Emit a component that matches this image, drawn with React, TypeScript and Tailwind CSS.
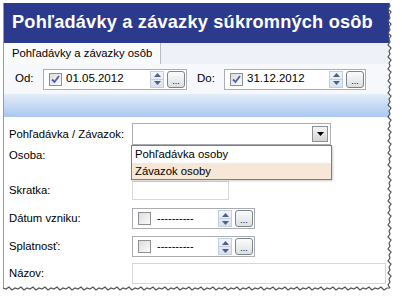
import React from "react";

function Check({ checked }: { checked: boolean }) {
  return (
    <div className="w-[13px] h-[13px] shrink-0 border border-[#8e8f8f] bg-gradient-to-br from-[#dcdcdc] to-[#fbfbfb] flex items-center justify-center">
      {checked && (
        <svg width="11" height="11" viewBox="0 0 11 11">
          <path d="M2 5.5 L4.5 8 L9 2" fill="none" stroke="#4a5fb3" strokeWidth="1.8" />
        </svg>
      )}
    </div>
  );
}

function Spin() {
  return (
    <div className="w-[14px] h-[17px] shrink-0 flex flex-col border border-[#c5cfdc] bg-gradient-to-b from-[#f2f5fa] to-[#d9e2ee]">
      <div className="flex-1 flex items-center justify-center border-b border-[#c5cfdc]">
        <svg width="7" height="4" viewBox="0 0 7 4"><path d="M3.5 0 L7 4 L0 4Z" fill="#4d6185" /></svg>
      </div>
      <div className="flex-1 flex items-center justify-center">
        <svg width="7" height="4" viewBox="0 0 7 4"><path d="M0 0 L7 0 L3.5 4Z" fill="#4d6185" /></svg>
      </div>
    </div>
  );
}

function Dots() {
  return (
    <div className="w-[18px] h-[17px] shrink-0 rounded-[3px] border border-[#7b8590] bg-gradient-to-b from-[#fbfbfb] to-[#dcdfe3] flex items-end justify-center pb-[3px]">
      <span className="text-[9px] leading-[6px] text-black">...</span>
    </div>
  );
}

function DateBox({ w, checked, text }: { w: string; checked: boolean; text: string }) {
  return (
    <div className={`${w} h-[21px] shrink-0 border border-[#abadb3] bg-white flex items-center pl-[5px] pr-[1px]`}>
      <Check checked={checked} />
      <span className="ml-[4px] text-[11.5px] text-black flex-1 whitespace-nowrap">{text}</span>
      <Spin />
      <div className="w-[3px] shrink-0" />
      <Dots />
    </div>
  );
}

function DashBox() {
  return (
    <div className="w-[123px] h-[21px] shrink-0 border border-[#abadb3] bg-white flex items-center pl-[5px] pr-[1px]">
      <Check checked={false} />
      <span className="ml-[6px] text-[11px] text-black flex-1 leading-none whitespace-nowrap">----------</span>
      <Spin />
      <div className="w-[3px] shrink-0" />
      <Dots />
    </div>
  );
}

export default function App() {
  return (
    <div className="w-[402px] h-[300px] bg-white relative overflow-hidden font-['Liberation_Sans',Arial,sans-serif] whitespace-nowrap">
      <div className="absolute left-[3px] top-[3px] w-[386px] h-[285px] border-l border-[#9a9a9a] flex flex-col bg-white">
        <div className="h-[40px] bg-[#2c3a8d] text-white font-bold text-[18.2px] flex items-center pl-[8px] tracking-[0.2px]">
          Pohľadávky a závazky súkromných osôb
        </div>
        <div className="h-[21px] bg-[#eef2f8] flex items-end">
          <div className="w-[157px] h-[21px] bg-[#fafbfd] border-r border-[#b8bcc4] flex items-center pl-[8px] text-[11.3px] text-black">
            Pohľadávky a závazky osôb
          </div>
        </div>
        <div className="h-[30px] bg-[#f6f8fb] flex items-center pl-[11px] text-[11.5px] text-black">
          <span className="w-[28px]">Od:</span>
          <DateBox w="w-[144px]" checked={true} text="01.05.2012" />
          <span className="ml-[10px] w-[27px]">Do:</span>
          <DateBox w="w-[142px]" checked={true} text="31.12.2012" />
        </div>
        <div className="h-[23px] bg-gradient-to-b from-[#e4edf9] to-[#a9c7ef]" />
        <div className="flex-1 relative text-[11.3px] text-black">
          <div className="flex flex-col pl-[5px] pt-[6px]">
            <div className="flex items-center h-[22px]">
              <span className="w-[123px]">Pohľadávka / Závazok:</span>
              <div className="w-[199px] h-[22px] border border-[#abadb3] bg-white flex items-center justify-end pr-[2px]">
                <div className="w-[16px] h-[16px] border border-[#8c9098] bg-gradient-to-b from-[#f4f4f4] to-[#d5d5d5] flex items-center justify-center">
                  <svg width="7" height="4" viewBox="0 0 7 4"><path d="M0 0 L7 0 L3.5 4Z" fill="#000" /></svg>
                </div>
              </div>
            </div>
            <div className="flex items-center h-[21px]">
              <span className="w-[123px]">Osoba:</span>
            </div>
            <div className="flex items-center h-[19px] mt-[15px]">
              <span className="w-[123px]">Skratka:</span>
              <div className="w-[97px] h-[19px] border border-[#d4d7dc] bg-white" />
            </div>
            <div className="flex items-center h-[21px] mt-[8px]">
              <span className="w-[123px]">Dátum vzniku:</span>
              <DashBox />
            </div>
            <div className="flex items-center h-[21px] mt-[7px]">
              <span className="w-[123px]">Splatnosť:</span>
              <DashBox />
            </div>
            <div className="flex items-center h-[21px] mt-[6px]">
              <span className="w-[123px]">Názov:</span>
              <div className="w-[254px] h-[21px] border border-[#d4d7dc] bg-white" />
            </div>
          </div>
          <div className="absolute left-[127px] top-[28px] w-[201px] bg-white border border-[#7a7f87] flex flex-col shadow-[1px_1px_2px_rgba(0,0,0,0.2)]">
            <div className="h-[17px] pl-[3px] flex items-center">Pohľadávka osoby</div>
            <div className="h-[16px] pl-[3px] flex items-center bg-[#f7e7d6]">Závazok osoby</div>
          </div>
        </div>
      </div>
      <svg className="absolute left-0 top-0" width="402" height="300" viewBox="0 0 402 300">
        <path
          d="M389 3 L390 6 L388 9 L391 12 L389 15 L390 18 L388 21 L391 24 L389 27 L390 30 L388 33 L391 36 L389 39 L390 42 L388 45 L391 48 L389 51 L390 54 L388 57 L391 60 L389 63 L390 66 L388 69 L391 72 L389 75 L390 78 L388 81 L391 84 L389 87 L390 90 L388 93 L391 96 L389 99 L390 102 L388 105 L391 108 L389 111 L390 114 L388 117 L391 120 L389 123 L390 126 L388 129 L391 132 L389 135 L390 138 L388 141 L391 144 L389 147 L390 150 L388 153 L391 156 L389 159 L390 162 L388 165 L391 168 L389 171 L390 174 L388 177 L391 180 L389 183 L390 186 L388 189 L391 192 L389 195 L390 198 L388 201 L391 204 L389 207 L390 210 L388 213 L391 216 L389 219 L390 222 L388 225 L391 228 L389 231 L390 234 L388 237 L391 240 L389 243 L390 246 L388 249 L391 252 L389 255 L390 258 L388 261 L391 264 L389 267 L390 270 L388 273 L391 276 L389 279 L390 282 L388 285 L390 288"
          fill="none" stroke="#555" strokeWidth="1.2"
        />
        <path
          d="M3 288 L6 289 L9 287 L12 290 L15 288 L18 289 L21 287 L24 290 L27 288 L30 289 L33 287 L36 290 L39 288 L42 289 L45 287 L48 290 L51 288 L54 289 L57 287 L60 290 L63 288 L66 289 L69 287 L72 290 L75 288 L78 289 L81 287 L84 290 L87 288 L90 289 L93 287 L96 290 L99 288 L102 289 L105 287 L108 290 L111 288 L114 289 L117 287 L120 290 L123 288 L126 289 L129 287 L132 290 L135 288 L138 289 L141 287 L144 290 L147 288 L150 289 L153 287 L156 290 L159 288 L162 289 L165 287 L168 290 L171 288 L174 289 L177 287 L180 290 L183 288 L186 289 L189 287 L192 290 L195 288 L198 289 L201 287 L204 290 L207 288 L210 289 L213 287 L216 290 L219 288 L222 289 L225 287 L228 290 L231 288 L234 289 L237 287 L240 290 L243 288 L246 289 L249 287 L252 290 L255 288 L258 289 L261 287 L264 290 L267 288 L270 289 L273 287 L276 290 L279 288 L282 289 L285 287 L288 290 L291 288 L294 289 L297 287 L300 290 L303 288 L306 289 L309 287 L312 290 L315 288 L318 289 L321 287 L324 290 L327 288 L330 289 L333 287 L336 290 L339 288 L342 289 L345 287 L348 290 L351 288 L354 289 L357 287 L360 290 L363 288 L366 289 L369 287 L372 290 L375 288 L378 289 L381 287 L384 290 L387 288 L390 288"
          fill="none" stroke="#555" strokeWidth="1.2"
        />
      </svg>
    </div>
  );
}
